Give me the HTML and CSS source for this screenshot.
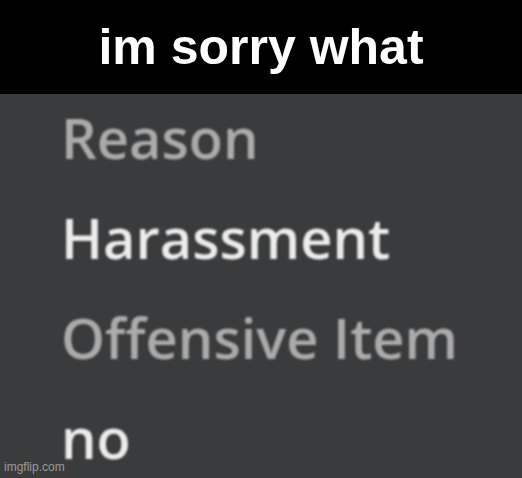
FILE: index.html
```html
<!DOCTYPE html>
<html lang="en">
<head>
  <meta charset="UTF-8">
  <title>im sorry what</title>
  <link rel="stylesheet" href="styles.css">
</head>
<body>

  <div class="meme">
    <div class="caption">im sorry what</div>

    <div class="reasons">
      <div class="item dim">Reason</div>
      <div class="item">Harassment</div>
      <div class="item dim">Offensive Item</div>
      <div class="item">no</div>
    </div>

    <div class="watermark">imgflip.com</div>
  </div>

</body>
</html>
```

FILE: styles.css
```css
* { margin: 0; padding: 0; box-sizing: border-box; }
body {
  background: #3a3b3d;
  width: 522px;
  height: 478px;
  overflow: hidden;
}

.meme {
  width: 522px;
  height: 478px;
  background: #3a3b3d;
  position: relative;
  overflow: hidden;
}

/* top caption bar */
.caption {
  height: 94px;
  background: #000;
  color: #fff;
  font-family: "Liberation Sans", Arial, sans-serif;
  font-weight: bold;
  font-size: 50px;
  text-align: center;
  line-height: 94px;
}

/* report menu */
.reasons {
  padding-left: 61px;
  font-family: "Open Sans", Lato, sans-serif;
  font-weight: 600;
  font-size: 56px;
  filter: blur(0.9px);
}
.item {
  height: 100px;
  line-height: 86px;
  color: #ececec;
  white-space: nowrap;
}
.item.dim { color: #ababab; }

.watermark {
  position: absolute;
  left: 4px;
  bottom: 4px;
  font-family: "Liberation Sans", Arial, sans-serif;
  font-size: 12px;
  color: #9a9a9a;
}
```
